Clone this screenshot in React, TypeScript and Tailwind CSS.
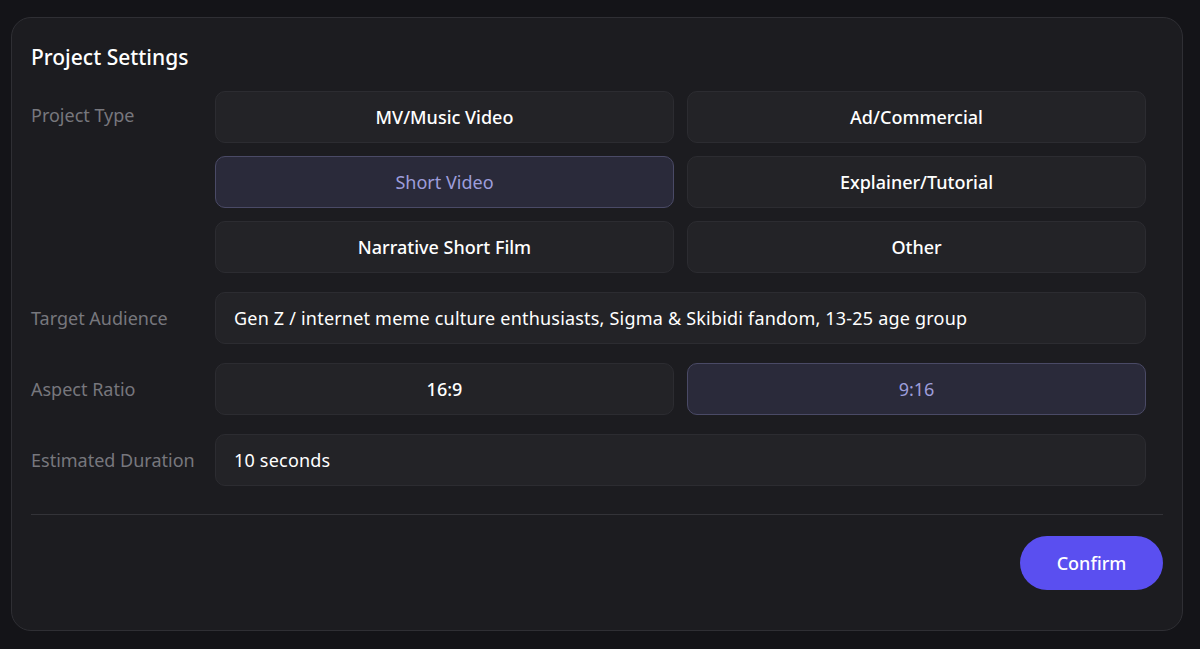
import React, { useState } from 'react';

const projectTypes = [
  'MV/Music Video',
  'Ad/Commercial',
  'Short Video',
  'Explainer/Tutorial',
  'Narrative Short Film',
  'Other',
];

const ratios = ['16:9', '9:16'];

const font = { fontFamily: '"Noto Sans", "Noto Sans CJK SC", sans-serif' };

function Option({ label, active, onClick }: { label: string; active: boolean; onClick: () => void }) {
  return (
    <button
      onClick={onClick}
      className={
        active
          ? 'h-[52px] rounded-[10px] border border-[#4a4a66] bg-[#2a2a3a] text-[18px] text-[#9d9ddb]'
          : 'h-[52px] rounded-[10px] border border-[#2c2c31] bg-[#232327] text-[18px] font-medium text-white'
      }
    >
      {label}
    </button>
  );
}

function Row({ label, children, top = false }: { label: string; children: React.ReactNode; top?: boolean }) {
  return (
    <div className={`flex ${top ? 'items-start' : 'items-center'}`}>
      <div className={`w-[184px] shrink-0 text-[18px] text-[#77777d] ${top ? 'pt-[11px]' : ''}`}>{label}</div>
      <div className="w-[931px]">{children}</div>
    </div>
  );
}

export default function App() {
  const [type, setType] = useState('Short Video');
  const [ratio, setRatio] = useState('9:16');

  return (
    <div className="min-h-screen bg-[#141418] px-[11px] pt-[17px] pb-[18px]" style={font}>
      <div className="w-[1172px] rounded-[20px] border border-[#2f2f34] bg-[#1c1c20] px-[19px] pt-[25px] pb-[40px]">
        <h2 className="text-[21px] font-medium leading-[28px] text-white">Project Settings</h2>

        <div className="mt-[20px] flex flex-col gap-[19px]">
          <Row label="Project Type" top>
            <div className="grid grid-cols-2 gap-x-[13px] gap-y-[13px]">
              {projectTypes.map(t => (
                <Option key={t} label={t} active={type === t} onClick={() => setType(t)} />
              ))}
            </div>
          </Row>

          <Row label="Target Audience">
            <div className="flex h-[52px] items-center rounded-[10px] border border-[#2c2c31] bg-[#232327] px-[18px] text-[18px] tracking-[0.2px] text-white">
              Gen Z / internet meme culture enthusiasts, Sigma &amp; Skibidi fandom, 13-25 age group
            </div>
          </Row>

          <Row label="Aspect Ratio">
            <div className="grid grid-cols-2 gap-x-[13px]">
              {ratios.map(r => (
                <Option key={r} label={r} active={ratio === r} onClick={() => setRatio(r)} />
              ))}
            </div>
          </Row>

          <Row label="Estimated Duration">
            <div className="flex h-[52px] items-center rounded-[10px] border border-[#2c2c31] bg-[#232327] px-[18px] text-[18px] tracking-[0.2px] text-white">
              10 seconds
            </div>
          </Row>
        </div>

        <div className="mt-[28px] h-px bg-[#333338]" />

        <div className="mt-[21px] flex justify-end">
          <button className="h-[54px] w-[143px] rounded-full bg-[#5a4ff0] text-[18px] font-medium text-white">
            Confirm
          </button>
        </div>
      </div>
    </div>
  );
}
